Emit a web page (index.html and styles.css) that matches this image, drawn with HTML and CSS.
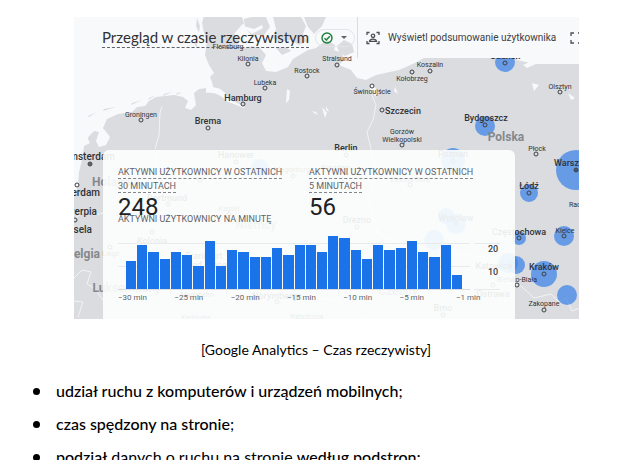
FILE: index.html
```html
<!DOCTYPE html>
<html lang="pl">
<head>
<meta charset="utf-8">
<meta name="viewport" content="width=device-width, initial-scale=1">
<title>Google Analytics – Czas rzeczywisty</title>
<link rel="stylesheet" href="styles.css">
</head>
<body>
<main class="document">
  <figure class="figure">
    <div class="realtime">
      <svg class="map" viewBox="74 17 505 302" preserveAspectRatio="xMidYMin slice" role="img" aria-label="Mapa aktywnych użytkowników">
        <path class="land" d="M74 319V195l4-8 1-15 3-12 2-14 5-10 5-5 5 1-3 9 3 6 7-2 4-8-7-9 4-9 11-5 14-2 5-5 8-1 4-5 7-4 9-1 9-1 9 2 5 4-3 7 6 2 5-5-2-12 5-4 8-1 7 3-2-9-2-5 4-4-5-8-4-10 2-14-3-8-2-10 3-11h42l-5 5 2 6-5 5-5 6 6 4-2 6 6 4 8-2 8 2 6 7-4 8 4 8 10 1 12-5 5-8 15-9 8-2 11-8 8 5-1 5 8 3 2 7-5 5 12 5 6 8 9 2 10-5 23-5 18-8 17-10h88l-5 8 18 4H580V319z"/>
        <path class="land" d="M244 19l8-2h14l4 10-6 8-13 0-6-7zM273 17h28l5 9-3 8 4 7-8 4-8-5-11 2-8-4 4-9zM304 17h22l-4 9-8 8-6-7zM276 48l10-1 5 4-9 4zM337 46l7-6 8 4 2 8-9 4-6-4zM88 116l9-4-8 5zM104 109l12-2-13 4zM132 103l10-3-11 5zM149 98l7-3-8 5zM164 94l8-2-9 4zM177 93l5-1-6 3zM197 18l3 8-1 7-3-7zM196 41l2 8-4-6z"/>
        <path class="water" d="M206 88c11-3 19 2 23 11l16 8-1 1-18-7c-5-6-11-9-20-8zM240 25l14 4 8-4 1 3-11 6zM287 89l3 2-1 9-3 3zM312 111l4 1 2 3-4-2zM326 106l3 6-3-2zM322 107l5 6-2 5zM534 60l12 4h-10l-9 4-4-3zM545 58h34v5l-24-2zM532 83l7 2-5 6zM568 93l7 5-4 2zM371 82l8 11-3 4-6-7zM395 87l3 7-4-3zM85 134l5 9-8 4z"/>
        <path class="border" d="M155 149l4-14 1-22 2-7M371 93l5 12-3 15-6 12 4 17 5 25-8 22 7 31 19 22M74 219l12-9 8 5 10-2M74 278l8-8 9 2-4 12 7 4 9 12M159 150l-9 30 8 22-13 20M103 207l14-10 5 12 18 2M74 301l9 1-5 15M250 319l17-23 20-10 24 12 26 2 30 19M376 231l30 17 17-13 25 18 35 4 10 20 28 9 13 12 17-4 8 8 7-4 6 13 10-4 9-9 10 9 7-2M240 270l13-12 18 8 25-7 32-3"/>
        <g class="users">
          <circle cx="260" cy="168" r="9"/><circle cx="505" cy="62" r="10"/><circle cx="485" cy="126" r="10"/><circle cx="576" cy="170" r="20"/><circle cx="529" cy="193" r="9"/><circle cx="453" cy="160" r="12"/><circle cx="446" cy="216" r="8"/><circle cx="456" cy="224" r="10"/><circle cx="434" cy="240" r="10"/><circle cx="519" cy="238" r="7"/><circle cx="564" cy="236" r="10"/><circle cx="508" cy="263" r="10"/><circle cx="516" cy="265" r="9"/><circle cx="544" cy="274" r="13"/><circle cx="567" cy="295" r="10"/>
        </g>
        <g class="points">
          <circle cx="248" cy="64" r="2"/><circle cx="307" cy="76" r="2"/><circle cx="265" cy="88" r="2"/><circle cx="243" cy="104" r="2"/><circle cx="141" cy="120" r="2"/><circle cx="208" cy="128" r="2"/><circle cx="337" cy="65" r="2"/><circle cx="412" cy="72" r="2"/><circle cx="430" cy="71" r="2"/><circle cx="372" cy="86" r="2"/><circle cx="382" cy="110" r="2"/><circle cx="402" cy="145" r="2"/><circle cx="485" cy="125" r="2"/><circle cx="505" cy="63" r="2"/><circle cx="560" cy="92" r="2"/><circle cx="536" cy="154" r="2"/><circle cx="576" cy="170" r="2"/><circle cx="529" cy="193" r="2"/><circle cx="519" cy="238" r="2"/><circle cx="564" cy="236" r="2"/><circle cx="517" cy="285" r="2"/><circle cx="544" cy="274" r="2"/><circle cx="544" cy="310" r="2"/><circle cx="90" cy="164" r="2"/><circle cx="77" cy="185" r="2"/><circle cx="75" cy="220" r="2"/><circle cx="236" cy="162" r="2"/><circle cx="200" cy="180" r="2"/><circle cx="168" cy="204" r="2"/><circle cx="229" cy="214" r="2"/><circle cx="152" cy="232" r="2"/><circle cx="110" cy="247" r="2"/><circle cx="293" cy="176" r="2"/><circle cx="346" cy="155" r="2"/><circle cx="357" cy="227" r="2"/><circle cx="410" cy="185" r="2"/><circle cx="453" cy="161" r="2"/><circle cx="456" cy="224" r="2"/><circle cx="493" cy="285" r="2"/><circle cx="443" cy="315" r="2"/><circle cx="277" cy="302" r="2"/>
          <path d="M88 164h4M90 162v4M574 170h4M576 168v4"/>
        </g>
        <g class="places small">
          <text x="228" y="49">Flensburg</text><text x="248" y="61">Kilonia</text><text x="307" y="73">Rostock</text><text x="265" y="85">Lubeka</text><text x="141" y="117">Groningen</text><text x="337" y="61">Stralsund</text><text x="430" y="67">Koszalin</text><text x="412" y="81">Kołobrzeg</text><text x="372" y="94">Świnoujście</text><text x="402" y="134">Gorzów</text><text x="402" y="142">Wielkopolski</text><text x="560" y="89">Olsztyn</text><text x="537" y="151">Płock</text><text x="580" y="207">Radom</text><text x="565" y="233">Kielce</text><text x="517" y="282">Bielsko-Biała</text><text x="544" y="306">Zakopane</text><text x="292" y="172">Magdeburg</text><text x="229" y="211">Kassel</text><text x="336" y="170">Poczdam</text><text x="410" y="182">Zielona Góra</text><text x="111" y="256">Liège</text><text x="197" y="297">Mannheim</text><text x="196" y="320">Karlsruhe</text><text x="307" y="319">Ratyzbona</text>
        </g>
        <g class="places city">
          <text x="243" y="101">Hamburg</text><text x="208" y="124">Brema</text><text x="403" y="114">Szczecin</text><text x="346" y="151">Berlin</text><text x="486" y="121">Bydgoszcz</text><text x="505" y="59">Gdańsk</text><text x="554" y="166" class="start">Warszawa</text><text x="529" y="189">Łódź</text><text x="519" y="235">Częstochowa</text><text x="544" y="270">Kraków</text><text x="236" y="158">Hanower</text><text x="167" y="201">Dortmund</text><text x="152" y="244">Kolonia</text><text x="204" y="259">Frankfurt</text><text x="211" y="268">nad Menem</text><text x="277" y="299">Norymberga</text><text x="453" y="157">Poznań</text><text x="456" y="221">Wrocław</text><text x="357" y="223">Drezno</text><text x="494" y="269">Katowice</text><text x="493" y="297">Ostrawa</text><text x="443" y="311">Brno</text>
        </g>
        <g class="places city west">
          <text x="115" y="160">Amsterdam</text><text x="100" y="196">Rotterdam</text><text x="97" y="215">Antwerpia</text><text x="92" y="233">Bruksela</text>
        </g>
        <g class="places country">
          <text x="506" y="141">Polska</text><text x="116" y="186">Holandia</text><text x="100" y="258" class="end">Belgia</text><text x="126" y="292">Luksemburg</text><text x="256" y="229">Niemcy</text><text x="398" y="295">Czechy</text>
        </g>
      </svg>
      <header class="bar">
        <div class="heading">
          <h1 class="title">Przegląd w czasie rzeczywistym</h1>
          <button class="status" type="button" aria-label="Stan danych">
            <svg class="check" viewBox="0 0 12 12" aria-hidden="true"><circle cx="6" cy="6" r="5"/><path d="M3.5 6.2l1.8 1.8 3.5-3.8"/></svg>
            <svg class="caret" viewBox="0 0 6 3" aria-hidden="true"><path d="M0 0h6L3 3z"/></svg>
          </button>
        </div>
        <div class="tools">
          <button class="tool" type="button">
            <svg class="tool-icon" viewBox="0 0 14 14" aria-hidden="true"><path d="M1 4V1.500h2.500M10.500 1.500H13V4M1 10v2.500h2.500M10.500 12.500H13V10"/><circle cx="7" cy="4.800" r="1.700"/><path d="M3.500 10.300c.5-3 6.500-3 7 0z"/></svg>
            <span>Wyświetl podsumowanie użytkownika</span>
          </button>
          <button class="expand" type="button" aria-label="Pełny ekran">
            <svg class="tool-icon" viewBox="0 0 14 14" aria-hidden="true"><path d="M2 5V2h3M9 2h3v3M2 9v3h3M9 12h3V9"/></svg>
          </button>
        </div>
      </header>
      <section class="card">
        <div class="metrics">
          <div class="metric">
            <h2 class="label"><span>Aktywni użytkownicy w ostatnich 30 minutach</span></h2>
            <p class="number">248</p>
          </div>
          <div class="metric">
            <h2 class="label"><span>Aktywni użytkownicy w ostatnich 5&nbsp;minutach</span></h2>
            <p class="number">56</p>
          </div>
        </div>
        <h2 class="chart-title">Aktywni użytkownicy na minutę</h2>
        <div class="chart">
          <div class="plot">
            <div class="bars">
              <i style="--v:12"></i><i style="--v:19"></i><i style="--v:16"></i><i style="--v:13"></i><i style="--v:16"></i><i style="--v:15"></i><i style="--v:10"></i><i style="--v:21"></i><i style="--v:10"></i><i style="--v:17"></i><i style="--v:16"></i><i style="--v:14"></i><i style="--v:14"></i><i style="--v:18"></i><i style="--v:15"></i><i style="--v:19"></i><i style="--v:19"></i><i style="--v:16"></i><i style="--v:23"></i><i style="--v:22"></i><i style="--v:17"></i><i style="--v:13"></i><i style="--v:19"></i><i style="--v:17"></i><i style="--v:18"></i><i style="--v:21"></i><i style="--v:16"></i><i style="--v:14"></i><i style="--v:19"></i><i style="--v:6"></i>
            </div>
            <div class="ticks">
              <span>−30 min</span><span>−25 min</span><span>−20 min</span><span>−15 min</span><span>−10 min</span><span>−5 min</span><span class="last">−1 min</span>
            </div>
          </div>
          <div class="scale"><span>20</span><span>10</span></div>
        </div>
      </section>
    </div>
    <figcaption class="caption">[Google Analytics – Czas rzeczywisty]</figcaption>
  </figure>
  <ul class="list">
    <li><strong>udział ruchu z komputerów i urządzeń mobilnych</strong>;</li>
    <li><strong>czas spędzony na stronie</strong>;</li>
    <li><strong>podział</strong> danych o ruchu na stronie <strong>według podstron;</strong></li>
  </ul>
</main>
</body>
</html>
```

FILE: styles.css
```css
* { box-sizing: border-box; }

body {
  margin: 0;
  height: 100vh;
  overflow: hidden;
  background: #fff;
  color: #000;
  font-family: Lato, "Open Sans", sans-serif;
}

h1, h2, p, ul, figure { margin: 0; padding: 0; }

button {
  border: 0;
  padding: 0;
  background: none;
  color: inherit;
  font: inherit;
}

.figure { padding-top: 17px; }

.realtime {
  position: relative;
  margin: 0 57px 0 74px;
  overflow: hidden;
  background: #f8f9fb;
  font-family: Roboto, sans-serif;
  color: #5f6368;
}

.map {
  position: absolute;
  inset: 0;
  width: 100%;
  height: 100%;
}

.land { fill: #dadce0; }
.water { fill: #f8f9fb; }
.border { fill: none; stroke: #f1f3f4; stroke-width: 1; }
.users { fill: #4285e8; fill-opacity: .75; }
.points { fill: none; stroke: #3c4043; stroke-width: 1; }

.places { fill: #303236; text-anchor: middle; }
.places .start { text-anchor: start; }
.places .end { text-anchor: end; }
.small { font-size: 7px; }
.city { font-size: 9px; font-weight: 500; }
.west { font-size: 10px; text-anchor: end; }
.country { fill: #85888c; font-size: 12px; font-weight: 700; }

.bar {
  position: relative;
  display: flex;
  height: 41px;
}

.heading {
  display: flex;
  flex: 1;
  align-items: center;
  gap: 6px;
  padding-left: 28px;
}

.title {
  border-bottom: 1px dashed #5f6368;
  color: #303134;
  font-family: Lato, sans-serif;
  font-size: 15px;
  font-weight: 400;
  line-height: 20px;
  white-space: nowrap;
}

.status {
  display: flex;
  align-items: center;
  gap: 8px;
  height: 18px;
  padding: 0 7px 0 5px;
  border: 1px solid #e3e5e8;
  border-radius: 9px;
}

.check {
  width: 12px;
  height: 12px;
  fill: none;
  stroke: #188038;
  stroke-width: 1.4;
}

.caret { width: 6px; height: 3px; fill: #5f6368; }

.tools {
  display: flex;
  align-items: center;
  justify-content: space-between;
  width: 222px;
  padding-left: 8px;
  overflow: hidden;
  border-left: 1px solid #dadce0;
  background: #f8f9fb;
}

.tool {
  display: flex;
  align-items: center;
  gap: 8px;
  color: #3c4043;
  font-size: 10px;
  white-space: nowrap;
}

.tool-icon {
  display: block;
  flex: none;
  width: 14px;
  height: 14px;
  fill: none;
  stroke: #4b4f54;
  stroke-width: 1.3;
}

.expand { margin-right: -4px; }

.card {
  position: relative;
  margin: 92px 64px 0 29px;
  padding: 15px 15px 13px;
  border-radius: 6px 6px 0 0;
  background: rgba(253, 255, 254, .91);
}

.metrics { display: flex; gap: 21px; }
.metric { width: 170px; }

.label, .chart-title {
  font-size: 9px;
  font-weight: 400;
  line-height: 14px;
  text-transform: uppercase;
}

.label span { padding-bottom: 1px; border-bottom: 1px dashed #80868b; }

.number {
  color: #202124;
  font-size: 24px;
  line-height: 28px;
}

.chart-title { margin-top: -9px; }

.chart { display: flex; gap: 4px; padding-top: 8px; }
.plot { flex: 1; }

.bars {
  display: flex;
  align-items: flex-end;
  gap: 1px;
  height: 56px;
  padding: 0 8px;
  border-bottom: 1px solid #dadce0;
  background:
    linear-gradient(#e8eaed, #e8eaed) 0 9px / 100% 1px no-repeat,
    linear-gradient(#e8eaed, #e8eaed) 0 32px / 100% 1px no-repeat;
}

.bars i {
  flex: 1;
  height: calc(var(--v) * 2.3px);
  background: #1a73e8;
}

.ticks {
  display: grid;
  grid-template-columns: repeat(6, 16%) auto;
  font-size: 8px;
  line-height: 16px;
  white-space: nowrap;
}

.ticks .last { justify-self: end; }

.scale {
  display: flex;
  flex-direction: column;
  width: 26px;
  height: 56px;
  padding: 9px 0 0 14px;
  border-bottom: 1px solid #e8eaed;
  background: linear-gradient(#e8eaed, #e8eaed) 0 9px / 100% 1px no-repeat;
  color: #3c4043;
  font-size: 9px;
  font-weight: 500;
  line-height: 12px;
}

.scale span + span { margin-top: 11px; }

.caption {
  padding: 21px 4px 0 0;
  font-size: 14px;
  line-height: 20px;
  text-align: center;
}

.list {
  padding: 14px 16px 0 56px;
  font-size: 16px;
  line-height: 33px;
  list-style: none;
}

.list li { display: flow-root; }

.list li::before {
  content: "";
  float: left;
  width: 7px;
  height: 7px;
  margin: 14px 0 0 -23px;
  border-radius: 50%;
  background: #000;
}

.list strong { font-weight: 500; }
```
